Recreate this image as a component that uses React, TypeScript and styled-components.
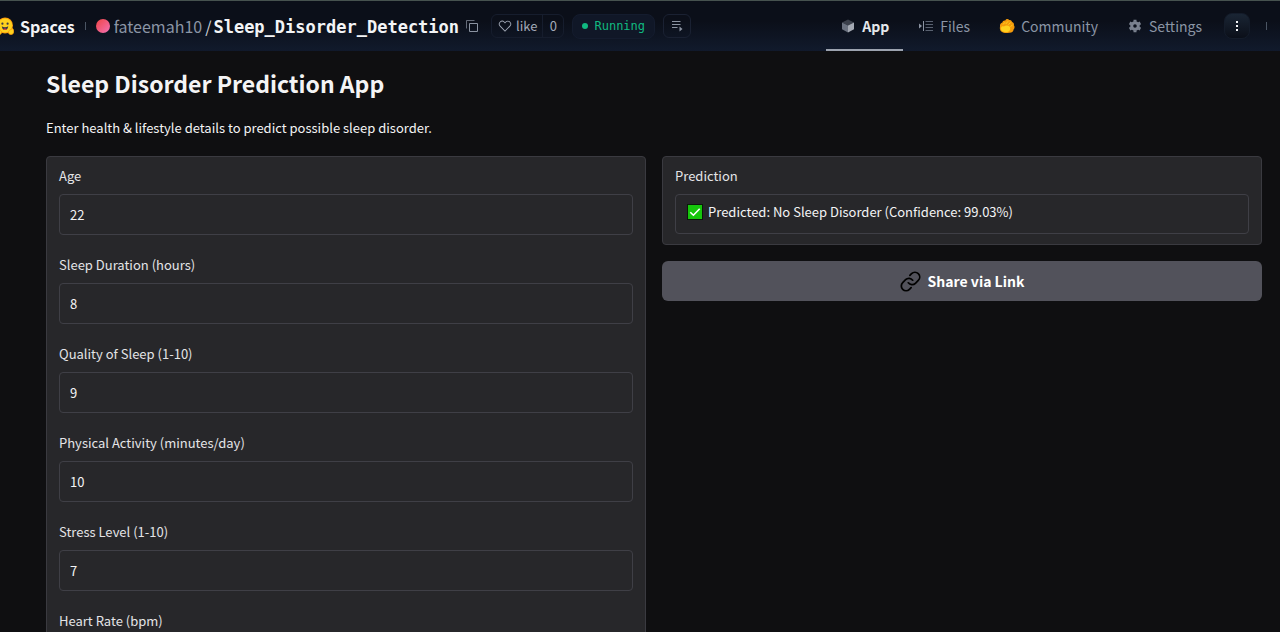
import React from "react";
import styled, { createGlobalStyle } from "styled-components";

const GlobalStyle = createGlobalStyle`
  *, *::before, *::after { box-sizing: border-box; }
  body {
    margin: 0;
    background: #0f0f11;
    color: #f4f4f5;
    font-family: "Noto Sans CJK SC", "Noto Sans", sans-serif;
    font-size: 13px;
    line-height: 20px;
  }
  button, input { font: inherit; color: inherit; }
`;

const Page = styled.div`
  display: flex;
  flex-direction: column;
  height: 100vh;
  overflow: hidden;
`;

const Header = styled.header`
  display: flex;
  align-items: center;
  justify-content: space-between;
  flex: none;
  height: 51px;
  padding-right: 13px;
  border-top: 1px solid #46524f;
  background: linear-gradient(to bottom, #0b0f19, #0b0f19 40%, #111a2c);
  font-size: 15px;
  line-height: 24px;
  white-space: nowrap;
  overflow: hidden;
`;

const Crumbs = styled.div`
  display: flex;
  align-items: center;
`;

const HomeLink = styled.a`
  display: flex;
  align-items: center;
  gap: 6px;
  margin-left: -4px;
  color: #f3f4f6;
  font-size: 16px;
  font-weight: 700;
  text-decoration: none;
`;

const Divider = styled.span<{ $space: number }>`
  width: 1px;
  height: 8px;
  margin: 0 0 0 ${(p) => p.$space}px;
  background: #4b5563;
`;

const Avatar = styled.span`
  width: 14px;
  height: 14px;
  margin: 0 4px 0 10px;
  border-radius: 50%;
  background: linear-gradient(to bottom right, #ef4444, #f472b6);
`;

const RepoPath = styled.div`
  display: flex;
  align-items: baseline;
  font-size: 16px;
`;

const OwnerLink = styled.a`
  color: #8b95a5;
  text-decoration: none;
`;

const Slash = styled.span`
  margin: 0 2px 0 3px;
  color: #d1d5db;
`;

const RepoLink = styled.a`
  color: #f3f4f6;
  font-family: "DejaVu Sans Mono", monospace;
  font-size: 17px;
  font-weight: 700;
  text-decoration: none;
`;

const IconButton = styled.button`
  display: flex;
  padding: 0;
  margin: 0 12px 0 7px;
  border: 0;
  background: none;
  color: #8b93a1;
`;

const LikeGroup = styled.div`
  display: flex;
  height: 24px;
  margin-right: 8px;
  border: 1px solid #161d2d;
  border-radius: 6px;
  color: #a3aab8;
  font-size: 13px;
  line-height: 22px;
`;

const LikeButton = styled.button`
  display: flex;
  align-items: center;
  gap: 4px;
  padding: 0 5px 0 6px;
  border: 0;
  background: none;
`;

const LikeCount = styled.button`
  width: 21px;
  padding: 0;
  border: 0;
  border-left: 1px solid #161d2d;
  background: none;
`;

const Status = styled.div`
  display: flex;
  align-items: center;
  gap: 6px;
  height: 25px;
  margin-right: 8px;
  padding: 0 9px;
  border: 1px solid #141c2e;
  border-radius: 8px;
  background: #101727;
  color: #10b981;
  font-family: "DejaVu Sans Mono", monospace;
  font-size: 12px;

  &::before {
    content: "";
    width: 6px;
    height: 6px;
    border-radius: 50%;
    background: #10b981;
  }
`;

const LogsButton = styled.button`
  display: flex;
  align-items: center;
  justify-content: center;
  width: 28px;
  height: 24px;
  padding: 0;
  border: 1px solid #1a2132;
  border-radius: 6px;
  background: none;
  color: #8b93a1;
`;

const Nav = styled.nav`
  display: flex;
  align-items: center;
  height: 100%;
`;

const Tab = styled.a<{ $active?: boolean }>`
  display: flex;
  align-items: center;
  gap: 6px;
  height: 100%;
  margin-right: 1px;
  padding: 2px 14px 0;
  border-bottom: 2px solid ${(p) => (p.$active ? "#9ca3af" : "transparent")};
  color: ${(p) => (p.$active ? "#e5e7eb" : "#8b95a5")};
  font-size: 14px;
  font-weight: ${(p) => (p.$active ? 700 : 400)};
  text-decoration: none;
`;

const MenuButton = styled.button`
  display: flex;
  align-items: center;
  justify-content: center;
  width: 26px;
  height: 26px;
  margin-left: 7px;
  padding: 0;
  border: 1px solid #141c2a;
  border-radius: 8px;
  background: linear-gradient(to bottom, #1a2534, #0b0f19);
  color: #f3f4f6;
`;

const Main = styled.main`
  flex: 1;
  min-height: 0;
  padding: 16px 18px 24px 46px;
  overflow-y: auto;
  scrollbar-width: none;
`;

const Title = styled.h1`
  margin: 0;
  font-size: 23px;
  font-weight: 700;
  line-height: 32px;
`;

const Intro = styled.p`
  margin: 19px 0 18px;
`;

const Columns = styled.div`
  display: grid;
  grid-template-columns: 1fr 1fr;
  align-items: start;
  gap: 16px;
`;

const Card = styled.div`
  display: flex;
  flex-direction: column;
  gap: 20px;
  padding: 9px 12px 10px;
  border: 1px solid #3a3a40;
  border-radius: 4px;
  background: #27272a;
`;

const Results = styled.section`
  display: flex;
  flex-direction: column;
  gap: 16px;
`;

const Field = styled.div`
  display: flex;
  flex-direction: column;
  gap: 8px;
`;

const Label = styled.label`
  color: #e4e4e7;
`;

const NumberInput = styled.input`
  width: 100%;
  height: 41px;
  padding: 0 10px;
  border: 1px solid #3f3f46;
  border-radius: 4px;
  outline: 0;
  background: transparent;
  appearance: textfield;

  &::-webkit-inner-spin-button { display: none; }
`;

const ResultBox = styled.div`
  display: flex;
  align-items: center;
  gap: 5px;
  height: 40px;
  padding: 0 11px 4px;
  border: 1px solid #3f3f46;
  border-radius: 4px;
`;

const ResultInput = styled.input`
  flex: 1;
  min-width: 0;
  padding: 0;
  border: 0;
  outline: 0;
  background: transparent;
`;

const ShareButton = styled.button`
  display: flex;
  align-items: center;
  justify-content: center;
  gap: 7px;
  height: 40px;
  border: 0;
  border-radius: 6px;
  background: #52525b;
  color: #fff;
  font-size: 14px;
  font-weight: 700;
`;

const HuggingFace = () => (
  <svg width="18" height="18" viewBox="0 0 18 18" aria-hidden="true">
    <circle cx="9" cy="8.5" r="8" fill="#ff9d0b" />
    <circle cx="9" cy="8.5" r="7.1" fill="#ffd21e" />
    <circle cx="6.4" cy="6.7" r="1.1" fill="#3a3b45" />
    <circle cx="11.6" cy="6.7" r="1.1" fill="#3a3b45" />
    <path d="M5.8 9.3c1.8 1.2 4.6 1.2 6.4 0-.1 2.4-1.4 3.6-3.2 3.6s-3.1-1.2-3.2-3.6z" fill="#3a3b45" />
    <path d="M7.3 12.2c.7-1.1 2.7-1.1 3.4 0-.9.9-2.5.9-3.4 0z" fill="#f94040" />
    <path d="M.8 12.3c.2-1 1.2-.9 1.7-.2l.7.9c.4-.8 1.4-.3 1.2.5l1 .8c.7 1.8-.4 3.2-2.3 3.2C1.2 17.5 0 16 .2 14.3zM17.2 12.3c-.2-1-1.2-.9-1.7-.2l-.7.9c-.4-.8-1.4-.3-1.2.5l-1 .8c-.7 1.8.4 3.2 2.3 3.2 1.9 0 3.1-1.5 2.9-3.2z" fill="#ffd21e" stroke="#ff9d0b" strokeWidth=".8" />
  </svg>
);

const CopyIcon = () => (
  <svg width="13" height="13" viewBox="0 0 13 13" fill="none" stroke="currentColor" aria-hidden="true">
    <path d="M3.5 3.5h8v8h-8z" />
    <path d="M.5 8.5v-8h8" opacity=".7" />
  </svg>
);

const HeartIcon = () => (
  <svg width="14" height="14" viewBox="0 0 32 32" fill="currentColor" aria-hidden="true">
    <path d="M22.45 6a5.47 5.47 0 0 1 3.91 1.64 5.7 5.7 0 0 1 0 8L16 26.13 5.64 15.64a5.7 5.7 0 0 1 0-8 5.48 5.48 0 0 1 7.82 0L16 10.24l2.53-2.58A5.44 5.44 0 0 1 22.45 6m0-2a7.47 7.47 0 0 0-5.34 2.24L16 7.36l-1.11-1.12a7.49 7.49 0 0 0-10.68 0 7.72 7.72 0 0 0 0 10.82L16 29l11.79-11.94a7.72 7.72 0 0 0 0-10.82A7.49 7.49 0 0 0 22.45 4z" />
  </svg>
);

const LogsIcon = () => (
  <svg width="12" height="12" viewBox="0 0 12 12" aria-hidden="true">
    <path d="M1 1.5h8.5M1 4.5h8.5M1 7.5h5.5" stroke="currentColor" />
    <path d="M8.5 6.5v5L11.5 9z" fill="currentColor" />
  </svg>
);

const CubeIcon = () => (
  <svg width="16" height="16" viewBox="0 0 16 16" aria-hidden="true">
    <path d="M8 1.5l6 3-6 3-6-3z" fill="#3b404b" />
    <path d="M2 4.5l6 3v7l-6-3.2z" fill="#6b7280" />
    <path d="M14 4.5l-6 3v7l6-3.2z" fill="#a4a9b3" />
  </svg>
);

const FilesIcon = () => (
  <svg width="16" height="16" viewBox="0 0 16 16" aria-hidden="true">
    <path d="M1 5.5L4 8l-3 2.5z" fill="#8b93a1" />
    <path d="M5.5 3v10" stroke="#8b93a1" />
    <path d="M7.5 3.5H15M7.5 6.5H15M7.5 9.5H15M7.5 12.5H15" stroke="#596170" />
  </svg>
);

const CommunityIcon = () => (
  <svg width="16" height="16" viewBox="0 0 16 16" aria-hidden="true">
    <path d="M1 8.5C.6 6.3 2 5 3.4 4.600 3.500 3 5 2.100 6.300 2.500 7.200.7 9.400.7 10.100 2.100c1.500-.6 2.900.5 2.900 2 1.600.3 2.300 1.800 1.900 3.200 1 1.300.8 3-.2 4-.3 2.500-2.200 3.700-4.500 3.500-2.500.5-5.900.5-7.600-1C.9 12.600.6 10.300 1 8.500z" fill="#f59b0b" />
    <path d="M2 10.300c.2-2 1.700-2.300 2.800-1.700 1.500-1.200 4.200-1.400 5.800-.2 1.200 1.700.8 4-1 5-2.200.8-4.800.7-6.300-.2C2.400 12.700 1.900 11.600 2 10.300z" fill="#ffd21e" />
    <path d="M4.300 6.200l1.500-1.700M7 5.700L8.800 3.600M9.800 6.400l1.600-1.700M11.800 8.500l1.500-1.500" stroke="#ffd21e" strokeLinecap="round" />
  </svg>
);

const GearIcon = () => (
  <svg width="16" height="16" viewBox="0 0 16 16" fill="none" stroke="#7b8290" aria-hidden="true">
    <circle cx="8" cy="8" r="3.3" strokeWidth="3" />
    <path d="M8 1.8v2M8 12.2v2M2.63 4.9l1.73 1M11.64 10.1l1.73 1M2.63 11.1l1.73-1M11.64 5.9l1.73-1" strokeWidth="3" />
  </svg>
);

const DotsIcon = () => (
  <svg width="4" height="12" viewBox="0 0 4 12" fill="currentColor" aria-hidden="true">
    <path d="M1 1h2v2H1zM1 5h2v2H1zM1 9h2v2H1z" />
  </svg>
);

const CheckIcon = () => (
  <svg width="16" height="16" viewBox="0 0 16 16" aria-hidden="true">
    <path d="M0 0h16v16H0z" fill="#0b1a0b" />
    <path d="M1 1h14v14H1z" fill="#16c60c" />
    <path d="M3.3 8.2l3.1 3L12.7 4.7" fill="none" stroke="#fff" strokeWidth="1.6" />
  </svg>
);

const LinkIcon = () => (
  <svg width="21" height="21" viewBox="0 0 24 24" fill="none" stroke="#000" strokeWidth="2" strokeLinecap="round" strokeLinejoin="round" aria-hidden="true">
    <path d="M9.5 13.5a5.4 5.4 0 0 0 8.1.6l3.3-3.3a5.4 5.4 0 0 0-7.7-7.7l-1.9 1.9" />
    <path d="M14.5 10.5a5.4 5.4 0 0 0-8.1-.6l-3.3 3.3a5.4 5.4 0 0 0 7.7 7.7l1.9-1.9" />
  </svg>
);

const tabs = [
  { name: "App", icon: <CubeIcon />, active: true },
  { name: "Files", icon: <FilesIcon /> },
  { name: "Community", icon: <CommunityIcon /> },
  { name: "Settings", icon: <GearIcon /> },
];

const fields = [
  { id: "age", label: "Age", value: 22 },
  { id: "duration", label: "Sleep Duration (hours)", value: 8 },
  { id: "quality", label: "Quality of Sleep (1-10)", value: 9 },
  { id: "activity", label: "Physical Activity (minutes/day)", value: 10 },
  { id: "stress", label: "Stress Level (1-10)", value: 7 },
  { id: "heart-rate", label: "Heart Rate (bpm)", value: 70 },
];

export default function App() {
  return (
    <Page>
      <GlobalStyle />
      <Header>
        <Crumbs>
          <HomeLink href="#spaces"><HuggingFace />Spaces</HomeLink>
          <Divider $space={10} />
          <Avatar />
          <RepoPath>
            <OwnerLink href="#owner">fateemah10</OwnerLink>
            <Slash>/</Slash>
            <RepoLink href="#repo">Sleep_Disorder_Detection</RepoLink>
          </RepoPath>
          <IconButton aria-label="Copy name"><CopyIcon /></IconButton>
          <LikeGroup>
            <LikeButton><HeartIcon />like</LikeButton>
            <LikeCount>0</LikeCount>
          </LikeGroup>
          <Status>Running</Status>
          <LogsButton aria-label="Logs"><LogsIcon /></LogsButton>
        </Crumbs>
        <Nav>
          {tabs.map((tab) => (
            <Tab key={tab.name} href={`#${tab.name.toLowerCase()}`} $active={tab.active}>
              {tab.icon}{tab.name}
            </Tab>
          ))}
          <MenuButton aria-label="More"><DotsIcon /></MenuButton>
          <Divider $space={16} />
        </Nav>
      </Header>
      <Main>
        <Title>Sleep Disorder Prediction App</Title>
        <Intro>Enter health &amp; lifestyle details to predict possible sleep disorder.</Intro>
        <Columns>
          <Card as="form">
            {fields.map((field) => (
              <Field key={field.id}>
                <Label htmlFor={field.id}>{field.label}</Label>
                <NumberInput id={field.id} type="number" defaultValue={field.value} />
              </Field>
            ))}
          </Card>
          <Results>
            <Card>
              <Field>
                <Label htmlFor="prediction">Prediction</Label>
                <ResultBox>
                  <CheckIcon />
                  <ResultInput id="prediction" readOnly value="Predicted: No Sleep Disorder (Confidence: 99.03%)" />
                </ResultBox>
              </Field>
            </Card>
            <ShareButton><LinkIcon />Share via Link</ShareButton>
          </Results>
        </Columns>
      </Main>
    </Page>
  );
}
